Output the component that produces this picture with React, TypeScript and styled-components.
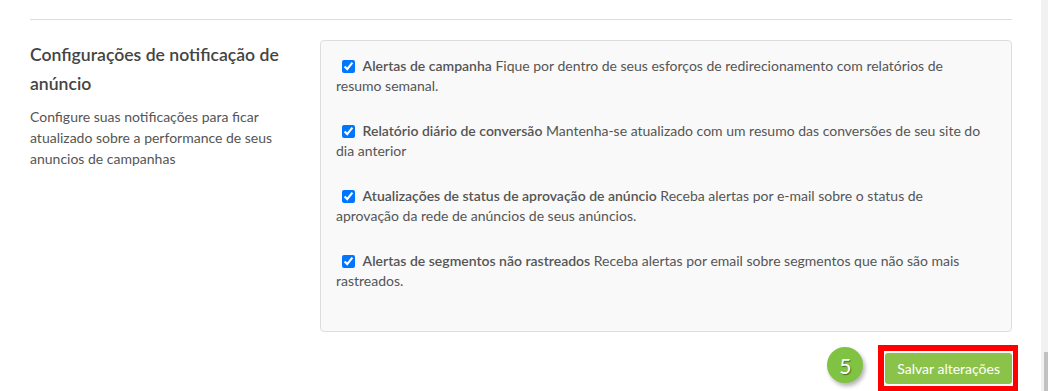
import React from "react";
import styled, { createGlobalStyle } from "styled-components";

const GlobalStyle = createGlobalStyle`
  html, body {
    margin: 0;
    padding: 0;
    background: #fff;
    font-family: Lato, "Open Sans", Arial, sans-serif;
    overflow: hidden;
  }
`;

const Page = styled.div`
  display: flex;
  height: 391px;
`;

const Main = styled.div`
  flex: 1;
  padding: 19px 29px 0 30px;
`;

const Scrollbar = styled.div`
  width: 7px;
  background: #f1f1f1;
  display: flex;
  flex-direction: column;
  justify-content: flex-end;
  align-items: flex-end;
`;

const Thumb = styled.div`
  width: 4px;
  height: 39px;
  background: #c1c1c1;
`;

const Divider = styled.hr`
  margin: 0;
  border: 0;
  border-top: 1px solid #ddd;
`;

const Section = styled.div`
  display: grid;
  grid-template-columns: 260px 1fr;
  column-gap: 30px;
  margin-top: 20px;
`;

const Title = styled.h3`
  margin: 0;
  font-size: 17.6px;
  line-height: 29px;
  font-weight: 600;
  color: #444;
`;

const Description = styled.p`
  margin: 8px 0 0;
  font-size: 14px;
  line-height: 21px;
  color: #555;
`;

const Box = styled.div`
  background: #f9f9f9;
  border: 1px solid #ddd;
  border-radius: 4px;
  padding: 15px 28px 15px 15px;
`;

const Item = styled.label`
  display: block;
  font-size: 14px;
  line-height: 20px;
  color: #555;
  margin-bottom: 25px;
`;

const Check = styled.input`
  width: 13px;
  height: 13px;
  margin: 0 4px 0 6px;
  vertical-align: -2px;
`;

const Strong = styled.b`
  font-weight: 600;
`;

const Footer = styled.div`
  display: flex;
  justify-content: flex-end;
  align-items: flex-start;
  margin-top: 21px;
`;

const Step = styled.div`
  width: 36px;
  height: 36px;
  margin: -6px 22px 0 0;
  border-radius: 50%;
  background: #80c342;
  box-shadow: 2px 3px 4px rgba(0, 0, 0, 0.3);
  color: #fff;
  font-size: 21px;
  display: flex;
  align-items: center;
  justify-content: center;
  text-shadow: 1px 1px 1px rgba(0, 0, 0, 0.45);
`;

const SaveButton = styled.button`
  position: relative;
  height: 31px;
  padding: 0 12px;
  border: 0;
  border-radius: 3px;
  background: #8bc34a;
  color: #fff;
  font-family: inherit;
  font-size: 14px;

  &::after {
    content: "";
    position: absolute;
    top: -8px;
    right: -6px;
    bottom: -8px;
    left: -7px;
    border: 6px solid #f00;
    border-right-width: 5px;
  }
`;

const items = [
  {
    label: "Alertas de campanha",
    text: "Fique por dentro de seus esforços de redirecionamento com relatórios de resumo semanal.",
  },
  {
    label: "Relatório diário de conversão",
    text: "Mantenha-se atualizado com um resumo das conversões de seu site do dia anterior",
  },
  {
    label: "Atualizações de status de aprovação de anúncio",
    text: "Receba alertas por e-mail sobre o status de aprovação da rede de anúncios de seus anúncios.",
  },
  {
    label: "Alertas de segmentos não rastreados",
    text: "Receba alertas por email sobre segmentos que não são mais rastreados.",
  },
];

const App = () => {
  return (
    <Page>
      <GlobalStyle />
      <Main>
        <Divider />
        <Section>
          <div>
            <Title>Configurações de notificação de anúncio</Title>
            <Description>
              Configure suas notificações para ficar atualizado sobre a
              performance de seus anuncios de campanhas
            </Description>
          </div>
          <Box>
            {items.map((item) => (
              <Item key={item.label}>
                <Check type="checkbox" defaultChecked />{" "}
                <Strong>{item.label}</Strong> {item.text}
              </Item>
            ))}
          </Box>
        </Section>
        <Footer>
          <Step>5</Step>
          <SaveButton>Salvar alterações</SaveButton>
        </Footer>
      </Main>
      <Scrollbar>
        <Thumb />
      </Scrollbar>
    </Page>
  );
};

export default App;
